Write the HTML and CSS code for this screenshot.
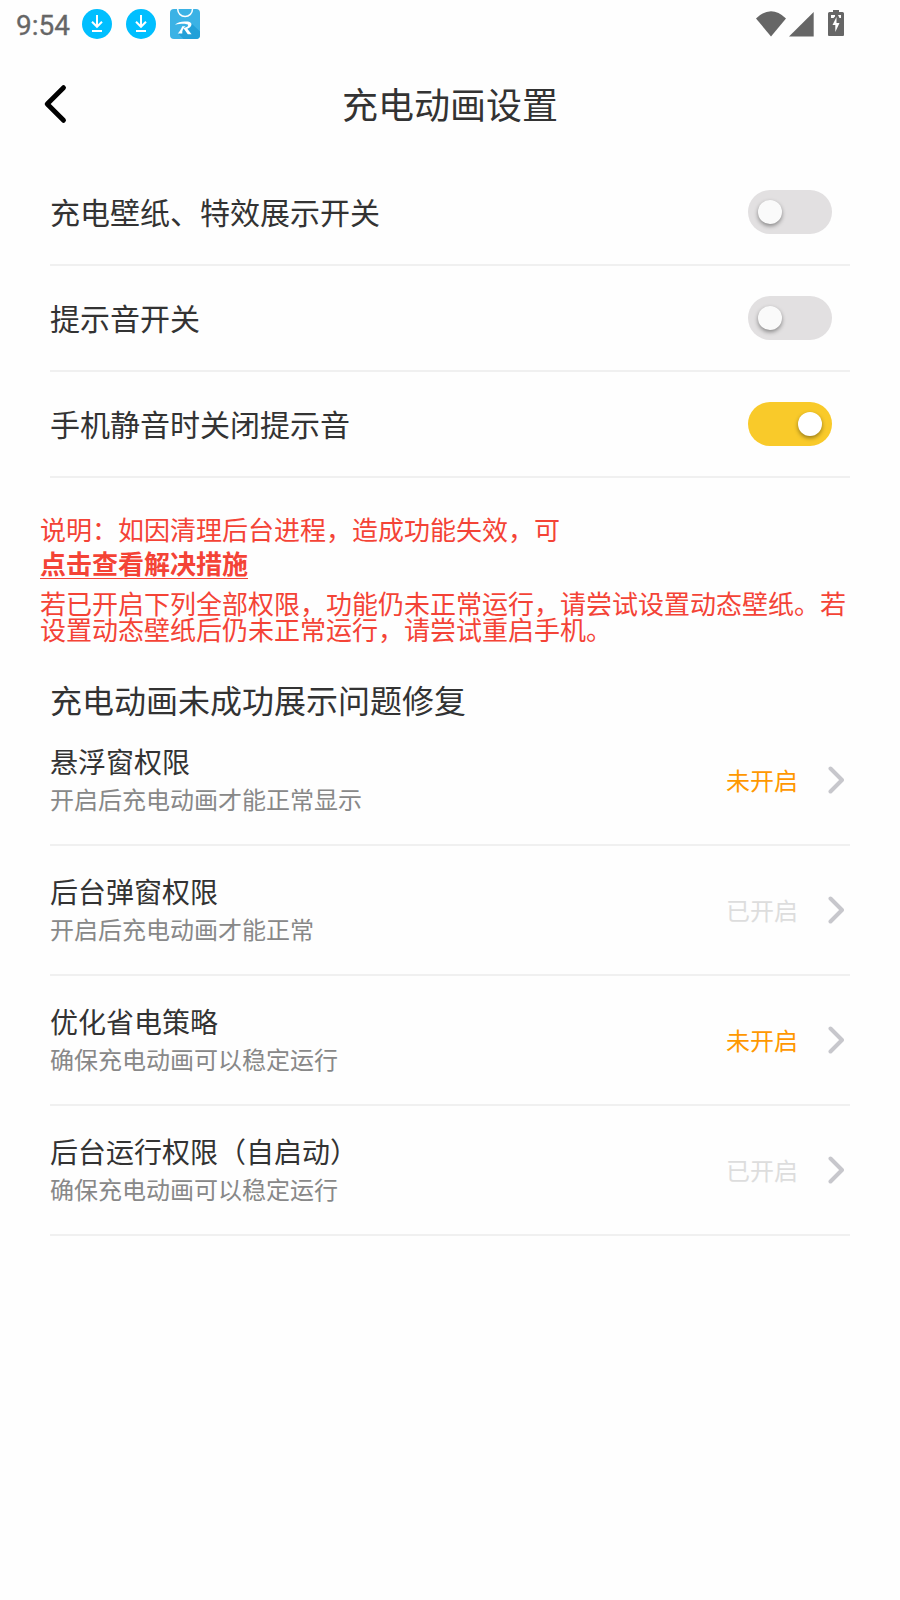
FILE: index.html
```
<!DOCTYPE html>
<html lang="zh-CN">
<head>
<meta charset="utf-8">
<title>充电动画设置</title>
<link rel="stylesheet" href="styles.css">
</head>
<body>
<div class="status-bar">
  <span class="clock">9:54</span>
  <svg class="notice" viewBox="0 0 30 30"><circle cx="15" cy="15" r="15" fill="#00bfff"/><path d="M15 6v12M10 12.800l5 5 5-5M10 22h10" fill="none" stroke="#fff" stroke-width="2"/></svg>
  <svg class="notice" viewBox="0 0 30 30"><circle cx="15" cy="15" r="15" fill="#00bfff"/><path d="M15 6v12M10 12.800l5 5 5-5M10 22h10" fill="none" stroke="#fff" stroke-width="2"/></svg>
  <svg class="notice" viewBox="0 0 30 30"><rect width="30" height="30" rx="4" fill="#3bb2e5"/><path d="M21 14L30 22.500V26a4 4 0 0 1-4 4H13.500L8.500 25z" fill="#22a0d8"/><path d="M7.700 0a7.400 7.600 0 0 0 14.800 0" fill="none" stroke="#fff" stroke-width="1.500"/><path d="M5 15.800C8 12.600 13 12 18 12.600C23 13.200 22.500 18 17.300 19.800L21.600 25.200H17.800L13.500 19.300C17.500 18.300 18.800 16.800 17.800 15.600C15.500 14.300 10.500 14.600 5 15.800z" fill="#fff"/><path d="M12.300 17.300h3.200C12.800 19.500 12 22 12.300 24.600H7.700C9.300 23.500 11 20 12.300 17.300z" fill="#fff"/></svg>
  <svg class="system" viewBox="0 0 90 30"><path d="M0 8.500Q15-6 30 8.500L15 26.500z"/><path d="M57.700 2v24.500H33z"/><path d="M77 2V0h6v2h3.500Q88 2 88 3.500v21.500q0 1-1 1H73q-1 0-1-1V3.500Q72 2 73.500 2z"/><path d="M75 5h4v1.500l-1.500 1.500H75zM82 5h3v3h-1.500zM80.500 7v6h3L79.300 22v-7H76.500z" fill="#fff"/></svg>
</div>
<header class="header">
  <svg class="back" viewBox="0 0 24 40"><path d="M20.500 3.700L4.200 20 20.500 36.300" fill="none" stroke="#000" stroke-width="4.900" stroke-linecap="round" stroke-linejoin="round"/></svg>
  <h1 class="title">充电动画设置</h1>
</header>
<main>
  <section class="list">
    <div class="row"><span class="label">充电壁纸、特效展示开关</span><span class="toggle"><i class="knob"></i></span></div>
    <div class="row"><span class="label">提示音开关</span><span class="toggle"><i class="knob"></i></span></div>
    <div class="row"><span class="label">手机静音时关闭提示音</span><span class="toggle on"><i class="knob"></i></span></div>
  </section>
  <section class="note">
    <p class="lead">说明：如因清理后台进程，造成功能失效，可</p>
    <a class="link">点击查看解决措施</a>
    <p class="detail">若已开启下列全部权限，功能仍未正常运行，请尝试设置动态壁纸。若设置动态壁纸后仍未正常运行，请尝试重启手机。</p>
  </section>
  <section class="list">
    <h2 class="subtitle">充电动画未成功展示问题修复</h2>
    <div class="item"><div class="info"><div class="name">悬浮窗权限</div><div class="desc">开启后充电动画才能正常显示</div></div><span class="state off">未开启</span><svg class="arrow" viewBox="0 0 16 28"><path d="M2.500 2.500L14 14 2.500 25.500"/></svg></div>
    <div class="item"><div class="info"><div class="name">后台弹窗权限</div><div class="desc">开启后充电动画才能正常</div></div><span class="state">已开启</span><svg class="arrow" viewBox="0 0 16 28"><path d="M2.500 2.500L14 14 2.500 25.500"/></svg></div>
    <div class="item"><div class="info"><div class="name">优化省电策略</div><div class="desc">确保充电动画可以稳定运行</div></div><span class="state off">未开启</span><svg class="arrow" viewBox="0 0 16 28"><path d="M2.500 2.500L14 14 2.500 25.500"/></svg></div>
    <div class="item"><div class="info"><div class="name">后台运行权限（自启动）</div><div class="desc">确保充电动画可以稳定运行</div></div><span class="state">已开启</span><svg class="arrow" viewBox="0 0 16 28"><path d="M2.500 2.500L14 14 2.500 25.500"/></svg></div>
  </section>
</main>
</body>
</html>
```
FILE: styles.css
```
* { box-sizing: border-box; margin: 0; padding: 0; }
body { width: 900px; min-height: 1600px; background: #fefefe; color: #333; font-family: "Noto Sans CJK SC", sans-serif; }
svg { display: block; flex: none; }
.status-bar { display: flex; align-items: center; height: 48px; padding: 0 54px 0 16px; }
.clock { width: 66px; font: 400 28px/48px Roboto, sans-serif; color: #666; padding-top: 3px; -webkit-text-stroke: .3px #666; }
.notice { width: 30px; height: 30px; margin-right: 14px; }
.system { width: 90px; height: 30px; margin-left: auto; margin-top: 2px; fill: #666; }
.header { display: grid; grid-template-columns: 80px 1fr 80px; align-items: center; height: 112px; }
.back { width: 24px; height: 40px; margin-left: 43px; }
.title { font-size: 36px; font-weight: 400; line-height: 52px; text-align: center; padding-bottom: 2px; }
.list { padding: 0 50px; }
.row { display: flex; align-items: center; justify-content: space-between; height: 106px; padding-right: 18px; border-bottom: 2px solid #f0f0f0; font-size: 30px; line-height: 44px; }
.label { padding-bottom: 3px; }
.toggle { display: flex; width: 84px; height: 44px; padding: 10px; border-radius: 22px; background: #e2e0e1; }
.toggle.on { justify-content: flex-end; background: #f9ca2a; }
.knob { width: 24px; height: 24px; border-radius: 50%; background: #fafafa; box-shadow: 0 2px 4px rgba(0, 0, 0, .4); }
.on .knob { background: #fff; }
.note { padding: 32px 40px 0; height: 192px; color: #f44336; font-size: 26px; }
.lead { line-height: 38px; }
.link { display: block; width: max-content; line-height: 30px; font-weight: 700; text-decoration: underline; text-decoration-thickness: 1px; text-underline-offset: 4px; }
.detail { width: 812px; line-height: 26px; margin-top: 12px; }
.subtitle { height: 46px; padding-top: 5px; font-size: 32px; font-weight: 400; line-height: 48px; }
.item { display: flex; align-items: center; height: 130px; padding-right: 6px; border-bottom: 2px solid #f0f0f0; }
.info { flex: 1; padding-bottom: 2px; }
.name { font-size: 28px; line-height: 40px; }
.desc { font-size: 24px; line-height: 36px; color: #888; }
.state { font-size: 24px; line-height: 36px; color: #ddd; margin-right: 30px; }
.state.off { color: #ff9800; }
.arrow { width: 16px; height: 28px; fill: none; stroke: #c7c7cc; stroke-width: 4; stroke-linecap: round; stroke-linejoin: round; }
```
